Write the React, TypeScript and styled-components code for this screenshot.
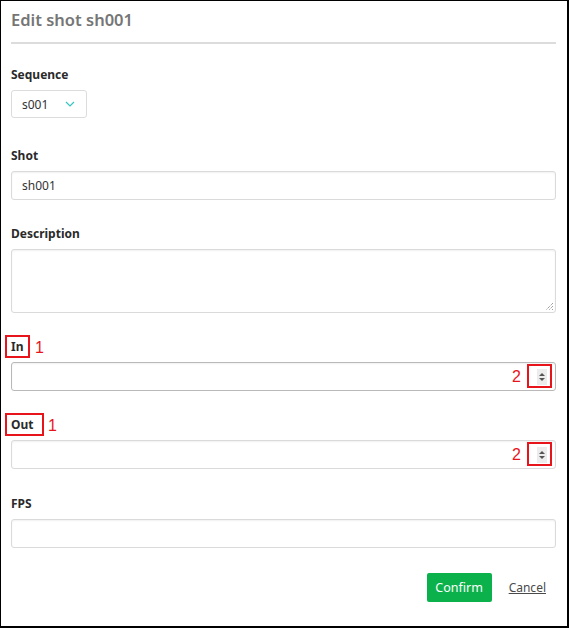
import React from "react";
import styled, { createGlobalStyle } from "styled-components";

const Global = createGlobalStyle`
  html, body { margin: 0; padding: 0; background: #fff; }
  body { font-family: "Noto Sans", "Open Sans", Arial, sans-serif; }
  * { box-sizing: border-box; }
`;

const Frame = styled.div`
  width: 569px;
  height: 628px;
  border-top: 1px solid #000;
  border-left: 1px solid #000;
  border-right: 2px solid #000;
  border-bottom: 2px solid #000;
  padding: 6px 11px 0 10px;
  display: flex;
  flex-direction: column;
`;

const Title = styled.h2`
  margin: 0;
  font-size: 16.5px;
  line-height: 26px;
  font-weight: 600;
  color: #767676;
  padding-bottom: 9px;
  border-bottom: 2px solid #dcdcdc;
  margin-bottom: 23px;
`;

const Field = styled.div<{ $mb?: number }>`
  display: flex;
  flex-direction: column;
  gap: 7px;
  margin-bottom: ${(p) => p.$mb ?? 26}px;
  align-items: flex-start;
`;

const LabelWrap = styled.div`
  position: relative;
`;

const Label = styled.label`
  font-size: 12px;
  line-height: 16px;
  font-weight: 700;
  color: #2a2a2a;
  display: block;
`;

const Mark = styled.span<{ $w: number }>`
  position: absolute;
  left: -6px;
  top: -4px;
  width: ${(p) => p.$w}px;
  height: 23px;
  border: 2px solid #e8141b;
`;

const Num = styled.span<{ $left: number }>`
  position: absolute;
  left: ${(p) => p.$left}px;
  top: -1px;
  font-size: 16px;
  line-height: 20px;
  color: #e8141b;
  font-family: "Liberation Sans", Arial, sans-serif;
`;

const Select = styled.div`
  width: 76px;
  height: 28px;
  border: 1px solid #dcdcdc;
  border-radius: 3px;
  display: flex;
  align-items: center;
  padding: 0 0 0 10px;
  font-size: 12px;
  color: #333;
  gap: 17px;
`;

const Input = styled.div<{ $dark?: boolean }>`
  position: relative;
  align-self: stretch;
  height: 29px;
  border: 1px solid ${(p) => (p.$dark ? "#b9b9b9" : "#dadada")};
  border-radius: 3px;
  box-shadow: inset 0 1px 2px rgba(0, 0, 0, 0.06);
  display: flex;
  align-items: center;
  padding: 0 10px;
  font-size: 12px;
  color: #333;
`;

const TextArea = styled.div`
  position: relative;
  align-self: stretch;
  height: 64px;
  border: 1px solid #dadada;
  border-radius: 3px;
  box-shadow: inset 0 1px 2px rgba(0, 0, 0, 0.06);
`;

const Grip = styled.svg`
  position: absolute;
  right: 1px;
  bottom: 1px;
`;

const Spinner = styled.span`
  position: absolute;
  right: 8px;
  top: 6px;
  width: 10px;
  height: 16px;
  background: #ececec;
  display: flex;
  align-items: center;
  justify-content: center;
`;

const SpinBox = styled.span`
  position: absolute;
  right: 3px;
  top: 1px;
  width: 25px;
  height: 24px;
  border: 2px solid #e8141b;
`;

const SpinNum = styled.span`
  position: absolute;
  right: 34px;
  top: 4px;
  font-size: 16px;
  line-height: 20px;
  color: #e8141b;
  font-family: "Liberation Sans", Arial, sans-serif;
`;

const Actions = styled.div`
  display: flex;
  justify-content: flex-end;
  align-items: center;
  gap: 17px;
  margin-top: -1px;
  padding-right: 10px;
`;

const Confirm = styled.button`
  height: 29px;
  width: 65px;
  border: none;
  border-radius: 2px;
  background: #0bb14a;
  color: #fff;
  font-family: inherit;
  font-size: 12.5px;
  padding: 0;
`;

const Cancel = styled.a`
  font-size: 12px;
  color: #4a4a4a;
  text-decoration: underline;
`;

const Spin = () => (
  <>
    <SpinNum>2</SpinNum>
    <Spinner>
      <svg width="6" height="10" viewBox="0 0 6 10">
        <path d="M0 4 L3 1 L6 4 Z" fill="#555" />
        <path d="M0 6 L3 9 L6 6 Z" fill="#555" />
      </svg>
    </Spinner>
    <SpinBox />
  </>
);

export default function App() {
  return (
    <>
      <Global />
      <Frame>
        <Title>Edit shot sh001</Title>
        <Field $mb={30}>
          <Label>Sequence</Label>
          <Select>
            s001
            <svg width="10" height="6" viewBox="0 0 10 6">
              <path d="M1 1 L5 5 L9 1" stroke="#35c4c0" strokeWidth="1.2" fill="none" />
            </svg>
          </Select>
        </Field>
        <Field>
          <Label>Shot</Label>
          <Input>sh001</Input>
        </Field>
        <Field>
          <Label>Description</Label>
          <TextArea>
            <Grip width="9" height="9" viewBox="0 0 9 9">
              <path d="M8 1 L1 8 M8 4 L4 8 M8 7 L7 8" stroke="#777" strokeWidth="1" strokeDasharray="1 1" />
            </Grip>
          </TextArea>
        </Field>
        <Field>
          <LabelWrap>
            <Label>In</Label>
            <Mark $w={25} />
            <Num $left={24}>1</Num>
          </LabelWrap>
          <Input $dark>
            <Spin />
          </Input>
        </Field>
        <Field $mb={27}>
          <LabelWrap>
            <Label>Out</Label>
            <Mark $w={39} />
            <Num $left={37}>1</Num>
          </LabelWrap>
          <Input>
            <Spin />
          </Input>
        </Field>
        <Field>
          <Label>FPS</Label>
          <Input />
        </Field>
        <Actions>
          <Confirm>Confirm</Confirm>
          <Cancel>Cancel</Cancel>
        </Actions>
      </Frame>
    </>
  );
}
